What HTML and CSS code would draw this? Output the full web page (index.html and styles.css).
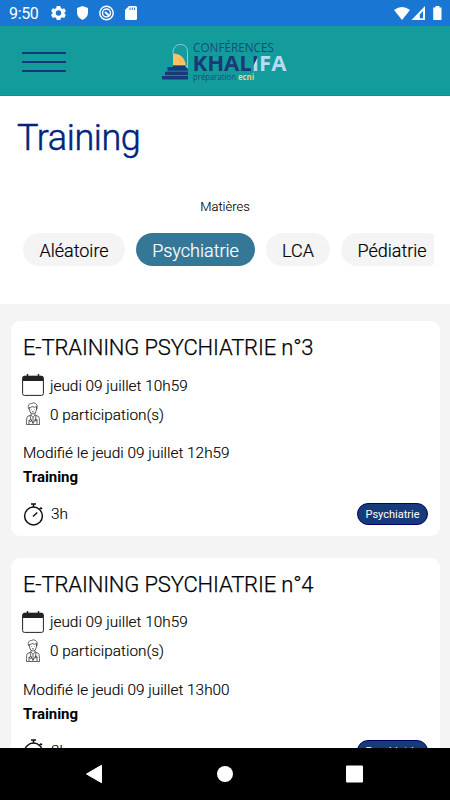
FILE: index.html
```html
<!DOCTYPE html>
<html lang="fr">
<head>
<meta charset="utf-8">
<title>Training</title>
<link rel="stylesheet" href="styles.css">
</head>
<body>
<svg class="defs" width="0" height="0" aria-hidden="true">
  <symbol id="calendar" viewBox="0 0 22 22">
    <path d="M1 3.5Q1 2 2.5 2H19.5Q21 2 21 3.5V7H1z" fill="#222"/>
    <path d="M5.5 0V3M16.500 0V3" stroke="#222" stroke-width="1.5"/>
    <rect x=".6" y="2.200" width="20.800" height="19.200" rx="1.800" fill="none" stroke="#222" stroke-width="1"/>
  </symbol>
  <symbol id="doctor" viewBox="0 0 14 23">
    <g fill="none" stroke="#222" stroke-width=".7">
      <path d="M2.700 7C1.500 3.500 3 1.500 5.500 1.500Q7.500 0 9.500 1.500Q12 2.500 11 7"/>
      <path d="M3.300 5.500Q5 6 6 4.500Q8.500 6 10.500 4.500V8Q10 12 7 12T3.500 8zM5 11.500V13L7 15.500L9 13V11.500"/>
      <path d="M5 13L1.500 14.500Q.5 15 .5 22.500H13.500Q13.500 15 12.500 14.500L9 13M4 13.500L5 18L7 21L9.500 17.500L10 13.500M7 15.500V22M3 18V22M11 18V22"/>
      <path d="M5.500 7.500H6M8.200 7.500H8.700M6 9.800H8"/>
      <circle cx="4.500" cy="18.500" r="1"/><circle cx="10" cy="18" r="1"/>
    </g>
  </symbol>
  <symbol id="timer" viewBox="0 0 20 23">
    <g fill="none" stroke="#111" stroke-width="1.500">
      <circle cx="10" cy="13" r="8.900"/>
      <path d="M7.500 1H12.500M10 1V4M16 6L18 4.500M17 4.500L18.500 6M9.500 13.500L13.800 9.500"/>
    </g>
  </symbol>
</svg>
<div class="screen">
  <div class="status">
    <span class="clock">9:50</span>
    <svg class="status-icons" width="88" height="16" viewBox="0 0 88 16">
      <path fill="#fff" fill-rule="evenodd" d="M5.700 1H9.300L9.800 3L11.300 3.900L13.200 3.300L14.900 6L13.500 7.500V8.600L14.900 10L13.200 13L11.300 12.300L9.800 13.100L9.300 15H5.700L5.200 13.100L3.700 12.300L1.800 13L.1 10L1.500 8.600V7.500L.1 6L1.800 3.300L3.700 3.900L5.200 3zM7.500 5.300A2.700 2.700 0 1 0 7.500 10.700A2.700 2.700 0 1 0 7.500 5.300z"/>
      <path fill="#fff" d="M31.500 1L37 3V7.500Q37 12.500 31.500 15Q26 12.500 26 7.500V3z"/>
      <circle cx="55.500" cy="8" r="6.700" fill="none" stroke="#fff" stroke-width="1.400"/>
      <circle cx="55.500" cy="8" r="4" fill="none" stroke="#fff" stroke-width="1.400"/>
      <path d="M54 7L58.500 11" stroke="#fff" stroke-width="2"/>
      <path fill="#fff" d="M78 1H84.500Q86 1 86 2.500V13.500Q86 15 84.500 15H75.500Q74 15 74 13.500V5z"/>
      <path d="M79 2.500V5M81.300 2.500V5M83.600 2.500V5" stroke="#1976d2" stroke-width="1"/>
    </svg>
    <svg class="signals" width="50" height="16" viewBox="0 0 50 16">
      <path fill="#fff" d="M0 4Q8 -2 16 4L8 14z"/>
      <path fill="#fff" fill-rule="evenodd" d="M31 0V14H17.500zM29 5L25.800 8.600V12.200H29z"/>
      <path fill="#fff" d="M41.500 0H45.500V1.500H47.500V14H39.200V1.500H41.500z"/>
    </svg>
  </div>
  <header class="header">
    <div class="burger"><i></i><i></i><i></i></div>
    <svg class="logo" width="126" height="42" viewBox="0 0 126 42">
      <defs>
        <linearGradient id="split" gradientUnits="userSpaceOnUse" x1="88" y1="22" x2="98" y2="27">
          <stop offset=".45" stop-color="#163b78"/><stop offset=".5" stop-color="#b4dcf2"/>
        </linearGradient>
      </defs>
      <path d="M11 15V13Q12 6 18.500 6T25.500 13V30" fill="none" stroke="#8ec9df" stroke-width="1"/>
      <path d="M11 27V15Q22 15 24 27z" fill="#fdc064"/>
      <path d="M11 27H24L26 30V41H0V37.500H3V33H5.500V28.500H11z" fill="#163b78"/>
      <path d="M3 32.700H26M0 37H26" stroke="#149c9c" stroke-width=".8"/>
      <path d="M23 27H24.500L26 31z" fill="#a9d6f0"/>
      <text x="31" y="13.700" textLength="81" lengthAdjust="spacingAndGlyphs" class="logo-top">CONFÉRENCES</text>
      <text x="30.500" y="32" textLength="94" lengthAdjust="spacingAndGlyphs" class="logo-name">KHAL<tspan fill="url(#split)">I</tspan><tspan class="pale">FA</tspan></text>
      <text x="31" y="41" textLength="43" lengthAdjust="spacingAndGlyphs" class="logo-sub">préparation</text>
      <text x="76" y="41" textLength="16" lengthAdjust="spacingAndGlyphs" class="logo-ecni">ecni</text>
    </svg>
  </header>
  <section class="filters">
    <h1>Training</h1>
    <p class="label">Matières</p>
    <div class="chips">
      <span class="chip c1">Aléatoire</span>
      <span class="chip c2 active">Psychiatrie</span>
      <span class="chip c3">LCA</span>
      <span class="chip c4">Pédiatrie</span>
    </div>
  </section>
  <main class="list">
    <article class="card">
      <h2>E-TRAINING PSYCHIATRIE n°3</h2>
      <div class="row date"><svg class="ico" width="22" height="22"><use href="#calendar"/></svg><span>jeudi 09 juillet 10h59</span></div>
      <div class="row people"><svg class="ico" width="22" height="23"><use href="#doctor"/></svg><span>0 participation(s)</span></div>
      <p class="modified">Modifié le jeudi 09 juillet 12h59</p>
      <p class="kind">Training</p>
      <div class="foot"><svg class="time" width="21" height="23"><use href="#timer"/></svg><span>3h</span><b class="badge">Psychiatrie</b></div>
    </article>
    <article class="card">
      <h2>E-TRAINING PSYCHIATRIE n°4</h2>
      <div class="row date"><svg class="ico" width="22" height="22"><use href="#calendar"/></svg><span>jeudi 09 juillet 10h59</span></div>
      <div class="row people"><svg class="ico" width="22" height="23"><use href="#doctor"/></svg><span>0 participation(s)</span></div>
      <p class="modified">Modifié le jeudi 09 juillet 13h00</p>
      <p class="kind">Training</p>
      <div class="foot"><svg class="time" width="21" height="23"><use href="#timer"/></svg><span>3h</span><b class="badge">Psychiatrie</b></div>
    </article>
  </main>
  <nav class="navbar">
    <svg width="450" height="52" viewBox="0 0 450 52">
      <path d="M86.500 26L101.500 17.300V34.700z" fill="#fff" stroke="#fff" stroke-width="1" stroke-linejoin="round"/>
      <circle cx="225" cy="26" r="8" fill="#fff"/>
      <rect x="346" y="17.500" width="17" height="17" rx="1" fill="#fff"/>
    </svg>
  </nav>
</div>
</body>
</html>
```

FILE: styles.css
```css
* { box-sizing: border-box; margin: 0; padding: 0; }
body { font-family: Roboto, "Liberation Sans", sans-serif; color: #000; }
svg { display: block; flex: none; }
.defs { position: absolute; }
.screen { width: 450px; height: 800px; overflow: hidden; display: flex; flex-direction: column; background: #f4f4f4; }

.status { flex: none; height: 26px; background: #1976d2; display: flex; align-items: center; padding: 0 6px 0 9px; color: #fff; }
.clock { font-size: 16px; letter-spacing: -.35px; width: 42px; line-height: 26px; padding-top: 1px; }
.signals { margin-left: auto; margin-top: 1px; }

.header { flex: none; height: 70px; background: #149c9c; display: flex; border-bottom: 1px solid #0d9092; }
.burger { margin: 26px 0 0 22px; width: 44px; height: 20px; display: flex; flex-direction: column; justify-content: space-between; }
.burger i { height: 2px; background: #17357c; }
.logo { margin: 13px 0 0 96px; overflow: visible; transform: translateY(-.5px); }
.logo-top { font: 400 12px "Open Sans", sans-serif; fill: #174a82; }
.logo-name { font: 700 21px "Open Sans", sans-serif; fill: #163b78; }
.pale { fill: #b4dcf2; }
.logo-sub { font: 400 8.500px "Open Sans", sans-serif; fill: #174a82; }
.logo-ecni { font: 700 8.500px "Open Sans", sans-serif; fill: #fdc878; }

.filters { flex: none; height: 208px; background: #fff; }
h1 { font-size: 36px; font-weight: 300; line-height: 42px; letter-spacing: -.4px; color: #00247d; padding: 21px 0 0 17px; -webkit-text-stroke: .5px #00247d; }
.label { margin-top: 40px; font-size: 13px; font-weight: 300; line-height: 16px; text-align: center; color: #000; -webkit-text-stroke: .1px; }
.chips { margin: 18px 16px 0 23px; display: flex; gap: 11px; overflow: hidden; }
.chip { flex: none; height: 33px; border-radius: 17px; background: #f4f4f4; font-size: 18px; font-weight: 300; line-height: 35px; text-align: center; color: #000; white-space: nowrap; -webkit-text-stroke: .2px; }
.c1 { width: 102px; } .c2 { width: 119px; } .c3 { width: 64px; } .c4 { width: 102px; }
.chip.active { background: #357796; color: #fff; }

.list { flex: 1; min-height: 0; overflow: hidden; padding: 17px 10px 0 11px; display: flex; flex-direction: column; gap: 21.500px; }
.card { flex: none; height: 215px; background: #fff; border-radius: 9px; padding: 14px 12px 0; }
h2 { font-size: 22px; font-weight: 300; line-height: 26px; letter-spacing: -.15px; white-space: nowrap; -webkit-text-stroke: .25px; }
.row { display: flex; align-items: center; font-size: 15.350px; font-weight: 300; }
.row span { margin-left: 6px; padding-top: 1px; }
.date { height: 22px; margin-top: 13px; margin-left: -1px; }
.people { height: 23px; margin-top: 6px; margin-left: -1px; }
.people span { padding-top: 2px; }
.modified { font-size: 15.350px; font-weight: 300; line-height: 20px; margin-top: 18px; }
.kind { font-size: 15px; font-weight: 700; line-height: 20px; margin-top: 4px; letter-spacing: -.05px; }
.row, .modified, .foot { -webkit-text-stroke: .15px; }
.foot { display: flex; align-items: center; height: 24px; margin-top: 15px; font-size: 15.350px; font-weight: 300; }
.foot span { margin-left: 7px; }
.badge { margin-left: auto; width: 71px; height: 22px; border-radius: 11px; border: 1px solid #00006e; background: #163b78; color: #fff; font-size: 11px; line-height: 21px; font-weight: 400; text-align: center; -webkit-text-stroke: 0; }

.navbar { flex: none; height: 52px; background: #000; }
```
